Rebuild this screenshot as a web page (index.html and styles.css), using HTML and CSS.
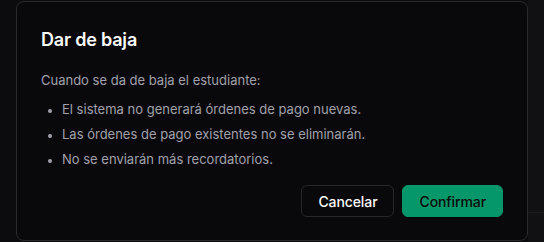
FILE: index.html
```html
<!DOCTYPE html>
<html lang="es">
  <head>
    <meta charset="UTF-8" />
    <meta name="viewport" content="width=device-width, initial-scale=1.0" />
    <title>Dar de baja</title>
    <link rel="stylesheet" href="styles.css">
  </head>
  <body>
    <div class="backdrop">
      <div class="side left"></div>
      <div class="dialog" role="dialog" aria-labelledby="dialog-title">
        <h2 id="dialog-title">Dar de baja</h2>
        <p class="intro">Cuando se da de baja el estudiante:</p>
        <ul class="effects">
          <li>El sistema no generará órdenes de pago nuevas.</li>
          <li>Las órdenes de pago existentes no se eliminarán.</li>
          <li>No se enviarán más recordatorios.</li>
        </ul>
        <div class="actions">
          <button class="btn btn-outline">Cancelar</button>
          <button class="btn btn-primary">Confirmar</button>
        </div>
      </div>
      <div class="side right">
        <div class="row-line"></div>
      </div>
    </div>
  </body>
</html>
```

FILE: styles.css
```css
* {
  margin: 0;
  padding: 0;
  box-sizing: border-box;
}
body {
  background-color: #0c0c0e;
  font-family: Inter, "Liberation Sans", sans-serif;
  color: #fafafa;
  width: 544px;
  height: 242px;
  overflow: hidden;
}
.backdrop {
  display: flex;
  height: 242px;
}
.side {
  width: 16px;
  flex-shrink: 0;
}
.side.right {
  background-color: #111114;
  padding-top: 212px;
}
.row-line {
  height: 1px;
  background-color: #1c1c20;
}
.dialog {
  width: 512px;
  height: 240px;
  margin-top: 1px;
  background-color: #09090b;
  border: 1px solid #2a2a2e;
  border-radius: 8px;
  padding: 24px;
}
.dialog h2 {
  font-size: 18px;
  font-weight: 600;
  line-height: 28px;
  letter-spacing: -0.2px;
}
.intro {
  margin-top: 16px;
  font-size: 13px;
  line-height: 20px;
  color: #a1a1aa;
}
.effects {
  list-style: disc;
  margin-top: 9px;
  padding-left: 21px;
  font-size: 13px;
  line-height: 20px;
  color: #a1a1aa;
}
.effects li {
  margin-top: 5px;
}
.effects li::marker {
  font-size: 11px;
}
.actions {
  display: flex;
  justify-content: flex-end;
  gap: 8px;
  margin-top: 16px;
}
.btn {
  height: 32px;
  padding: 0 16px;
  border-radius: 6px;
  font-family: Inter, "Liberation Sans", sans-serif;
  font-size: 14px;
  font-weight: 500;
  letter-spacing: -0.1px;
  cursor: pointer;
}
.btn-outline {
  background-color: #09090b;
  color: #fafafa;
  border: 1px solid #27272a;
}
.btn-primary {
  background-color: #059669;
  color: #0a0a0a;
  border: 1px solid #059669;
}
```
